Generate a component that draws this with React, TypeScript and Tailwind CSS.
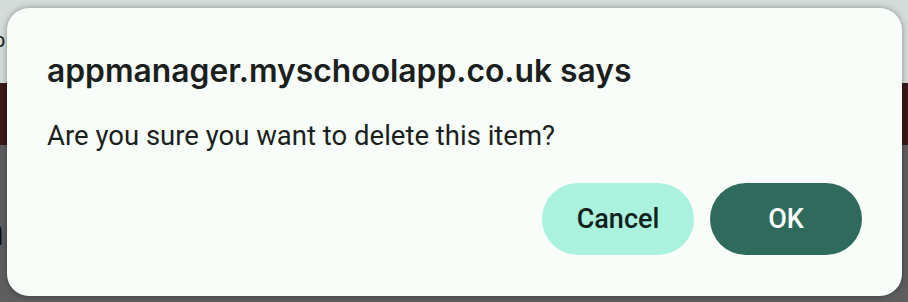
export default function App() {
  return (
    <div className="relative h-[302px] w-[908px] overflow-hidden bg-[#5e5e5e] font-['Roboto','Liberation_Sans',sans-serif]">
      {/* page behind the dialog */}
      <div className="flex h-full flex-col">
        <div className="h-[83px] bg-[#d3dcd8] pt-[30px] text-[20px] leading-none text-[#1a1a1a]">
          <span className="-ml-[6px]">p</span>
        </div>
        <div className="h-[62px] bg-[#3b1a17]" />
        <div className="flex-1 bg-[#5e5e5e] pt-[68px] text-[38px] leading-none text-[#111]">
          <span className="-ml-[17px]">h</span>
        </div>
      </div>

      {/* alert dialog */}
      <div className="absolute top-[8px] left-[7px] flex h-[288px] w-[895px] flex-col rounded-[22px] bg-[#f8fdfa] pt-[44px] pr-[40px] pl-[40px] shadow-[0_0_6px_rgba(0,0,0,0.35)]">
        <h2 className="font-['Inter','Roboto',sans-serif] text-[31.8px] leading-[38px] font-semibold text-[#1b1f1d]">
          appmanager.myschoolapp.co.uk says
        </h2>
        <p className="mt-[30px] text-[27.5px] leading-[32px] text-[#1b1f1d]">
          Are you sure you want to delete this item?
        </p>
        <div className="mt-[31px] flex justify-end gap-[16px]">
          <button className="h-[72px] w-[152px] rounded-full bg-[#abf2de] text-[27px] font-medium text-[#10221c]">
            Cancel
          </button>
          <button className="h-[72px] w-[152px] rounded-full bg-[#2e6b5c] text-[27px] font-medium text-white">
            OK
          </button>
        </div>
      </div>
    </div>
  );
}
